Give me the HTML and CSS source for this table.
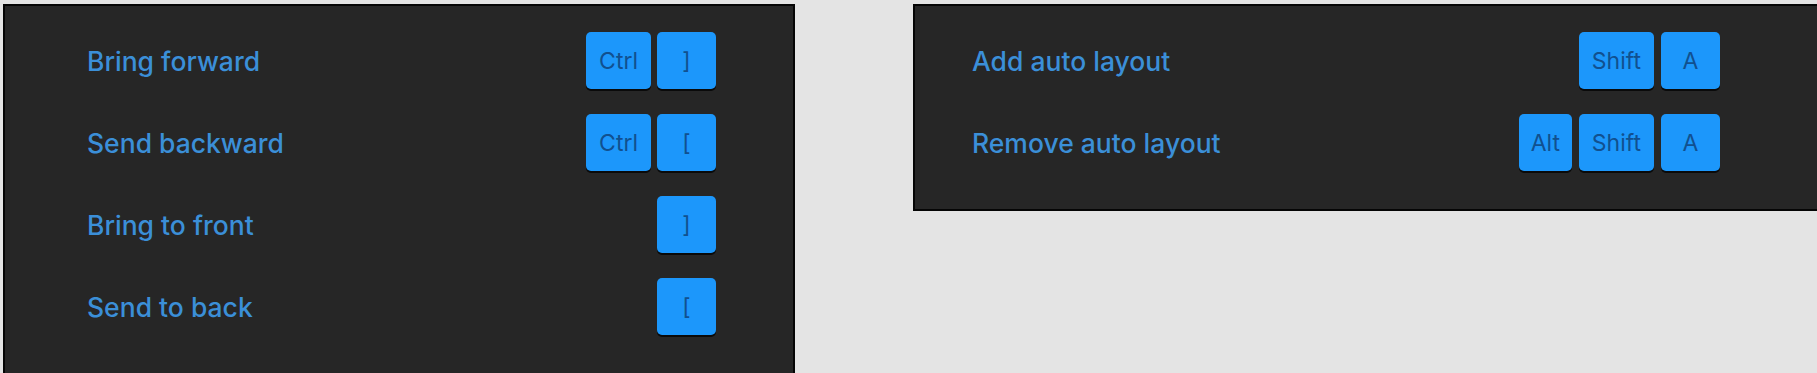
FILE: index.html
```html
<!DOCTYPE html>
<html lang="en">
<head>
<meta charset="utf-8">
<title>Keyboard shortcuts</title>
<link rel="stylesheet" href="styles.css">
</head>
<body>
<div class="board">
  <section class="panel panel-layers">
    <div class="row">
      <span class="label">Bring forward</span>
      <span class="keys"><kbd class="key">Ctrl</kbd><kbd class="key">]</kbd></span>
    </div>
    <div class="row">
      <span class="label">Send backward</span>
      <span class="keys"><kbd class="key">Ctrl</kbd><kbd class="key">[</kbd></span>
    </div>
    <div class="row">
      <span class="label">Bring to front</span>
      <span class="keys"><kbd class="key">]</kbd></span>
    </div>
    <div class="row">
      <span class="label">Send to back</span>
      <span class="keys"><kbd class="key">[</kbd></span>
    </div>
  </section>
  <section class="panel panel-auto">
    <div class="row">
      <span class="label">Add auto layout</span>
      <span class="keys"><kbd class="key">Shift</kbd><kbd class="key">A</kbd></span>
    </div>
    <div class="row">
      <span class="label">Remove auto layout</span>
      <span class="keys"><kbd class="key key-narrow">Alt</kbd><kbd class="key">Shift</kbd><kbd class="key">A</kbd></span>
    </div>
  </section>
</div>
</body>
</html>
```

FILE: styles.css
```css
html, body {
  margin: 0;
  padding: 0;
  background: #e4e4e4;
  overflow: hidden;
  height: 100%;
}

body {
  font-family: Inter, "Noto Sans", sans-serif;
}

.board {
  display: flex;
  align-items: flex-start;
  gap: 118px;
  padding: 4px 0 0 3px;
  width: 1900px;
}

.panel {
  background: #262626;
  border: 2px solid #050505;
  display: flex;
  flex-direction: column;
  gap: 25px;
  box-sizing: border-box;
}

.panel-layers {
  width: 792px;
  height: 420px;
  padding: 26px 77px 0 82px;
}

.panel-auto {
  width: 920px;
  padding: 26px 111px 38px 57px;
}

.row {
  display: flex;
  align-items: center;
  justify-content: space-between;
  height: 57px;
}

.label {
  color: #3b8fd8;
  font-size: 26.5px;
  font-weight: 500;
  padding-top: 1px;
}

.keys {
  display: flex;
  gap: 6px;
}

.key {
  font-family: Inter, "Noto Sans", sans-serif;
  display: flex;
  align-items: center;
  justify-content: center;
  box-sizing: border-box;
  min-width: 59px;
  height: 57px;
  padding: 0 13px;
  background: #1c97fb;
  color: #11508f;
  font-size: 23px;
  border-radius: 5px;
  box-shadow: 0 2px 0 #0a0a0a;
}

.panel-auto .keys {
  gap: 7px;
}

.key-narrow {
  min-width: 53px;
  padding: 0 8px;
}
```
